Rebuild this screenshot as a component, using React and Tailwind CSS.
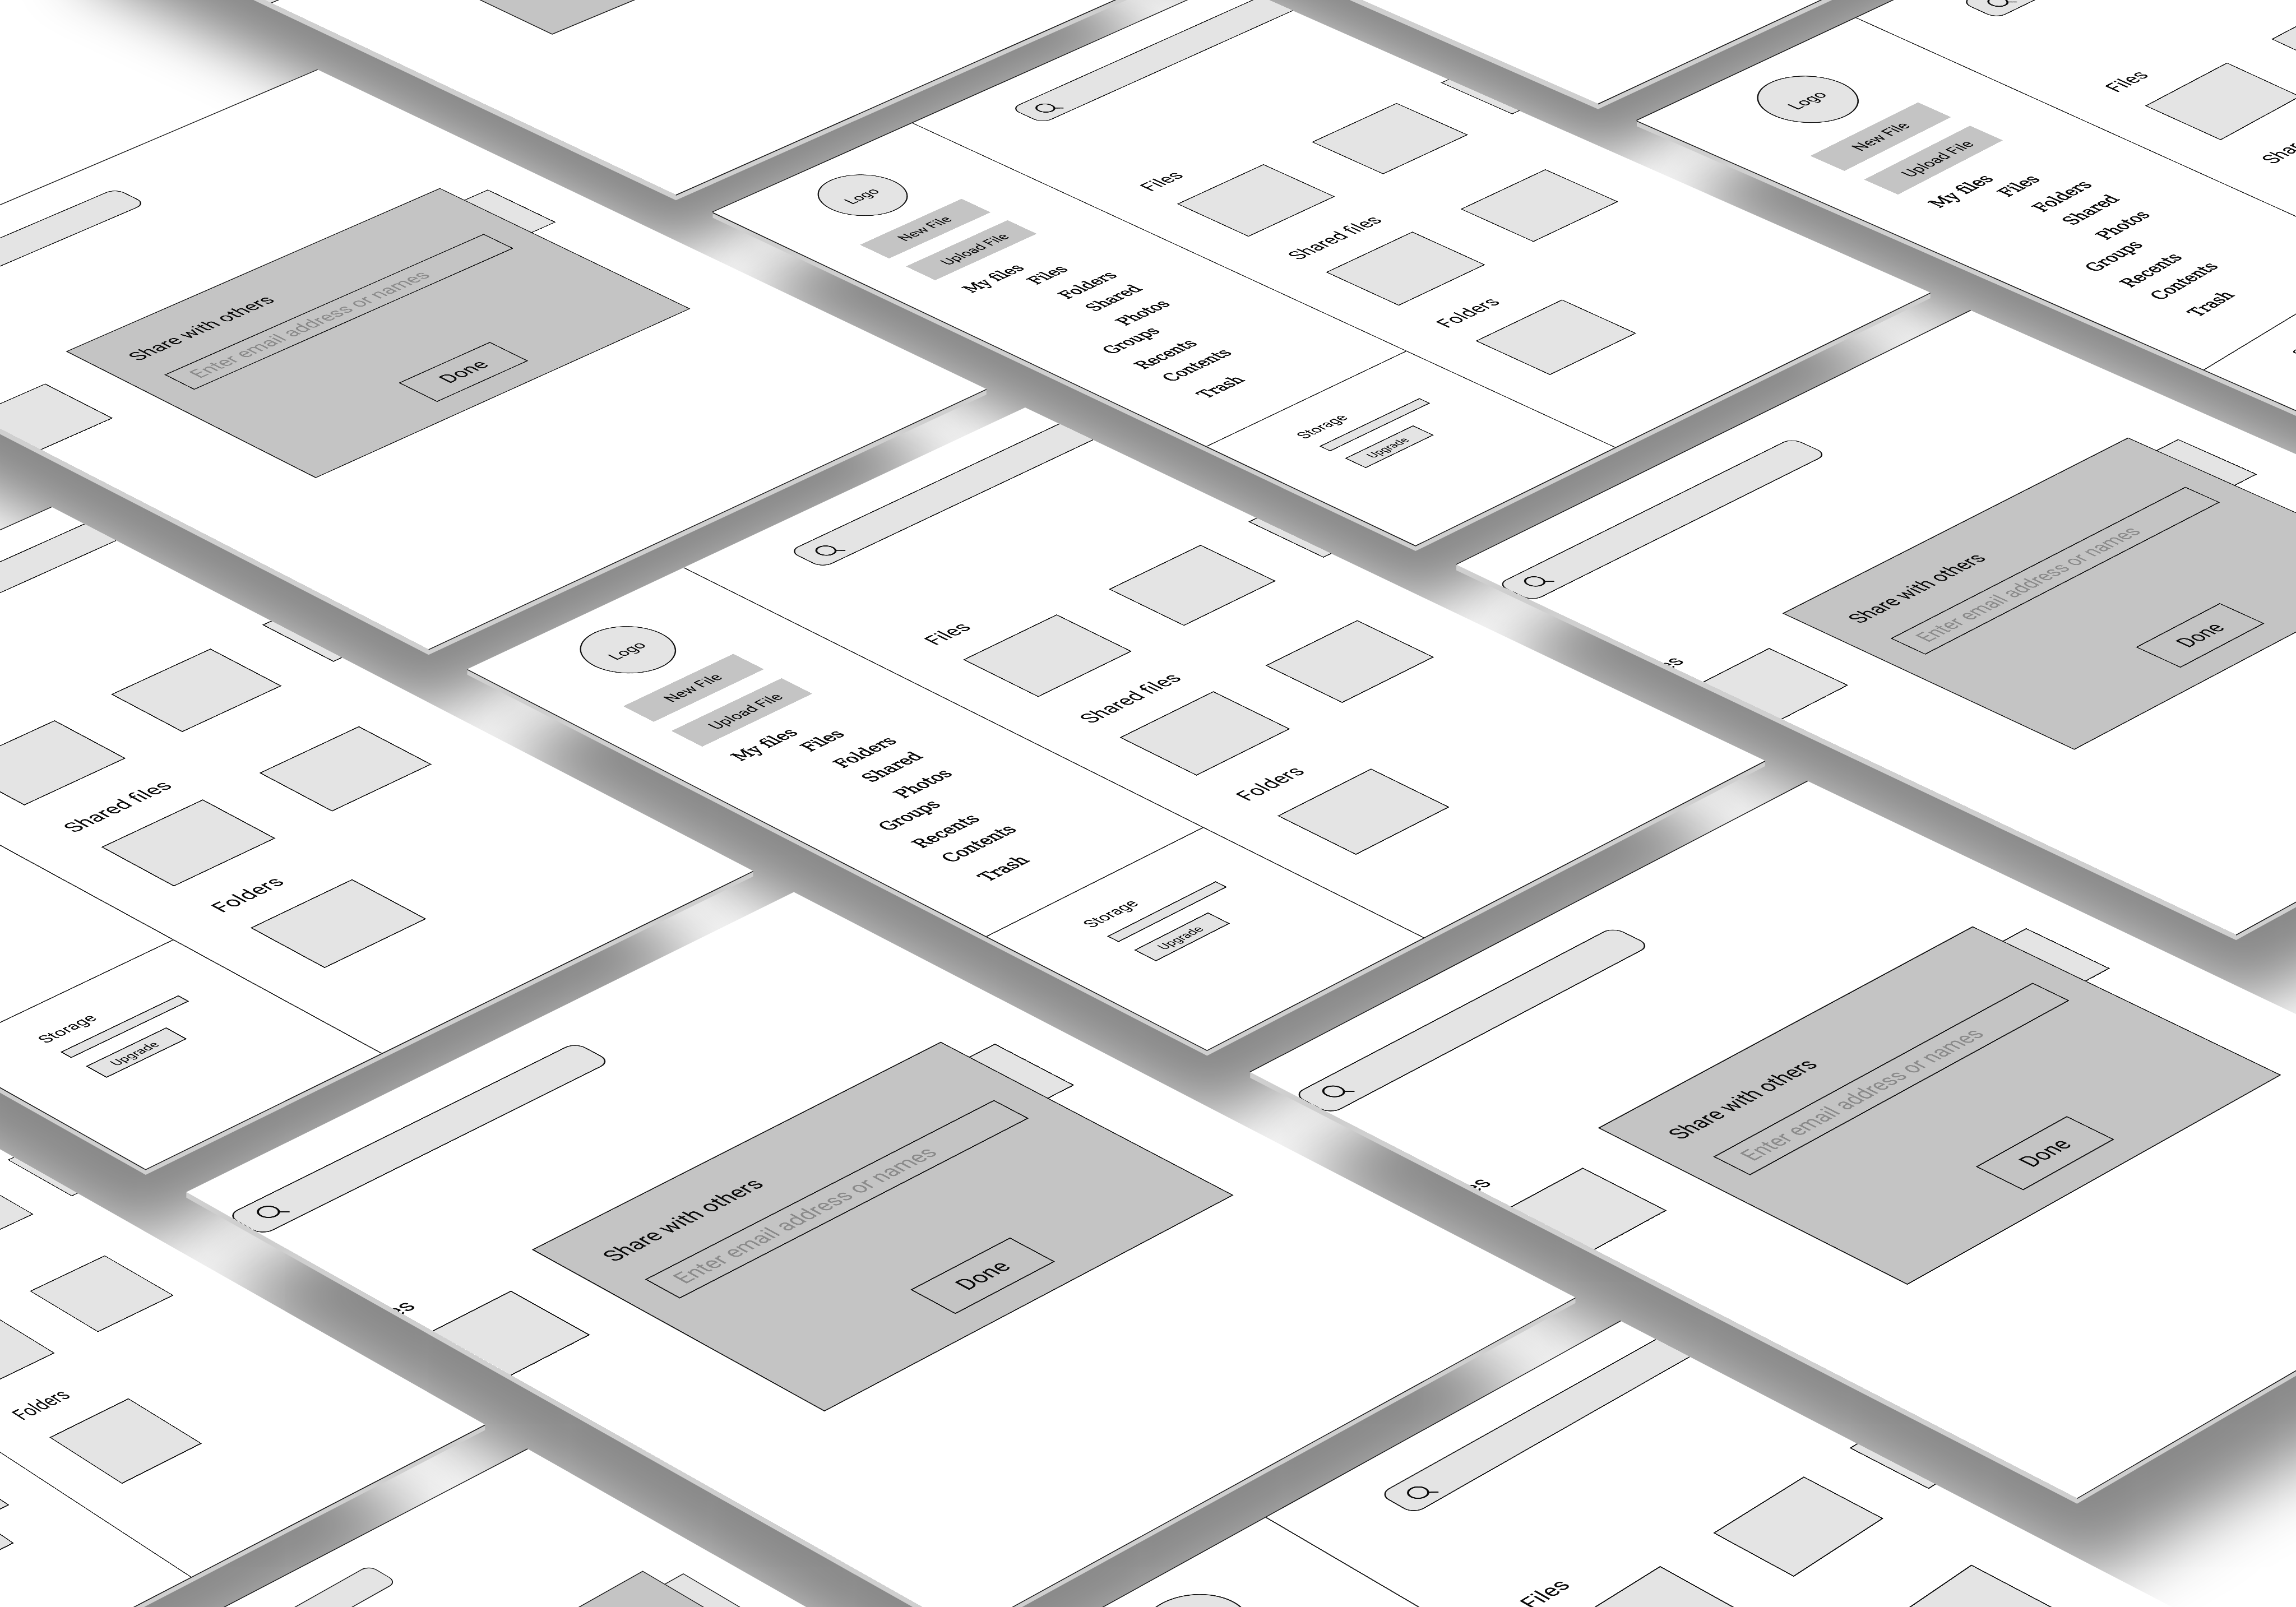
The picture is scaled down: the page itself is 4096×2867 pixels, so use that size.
import React from "react";

/* ---------- projection of the board ---------- */

// Screens are laid out flat at 2400 x 3000, then projected onto the tilted board.
const SCREEN_W = 2400;
const SCREEN_H = 3000;
const OUT = 0.8192;
const BOARD = [
  [1298.831, 1479.691, 1017.576],
  [-536.4755, 715.3939, 1457.175],
  [0.03759262, -0.049979, 1],
];
const GAP_X = 0.09322408;
const GAP_Y = 0.05517049;
const STAGGER = (1 + GAP_Y) / 2;
const THICKNESS = 10;
const IDENTITY = [
  [1, 0, 0],
  [0, 1, 0],
  [0, 0, 1],
];

const mul = (a, b) =>
  a.map((row) => b[0].map((_, j) => row.reduce((s, v, k) => s + v * b[k][j], 0)));

const inverse = ([[a, b, c], [d, e, f], [g, h, i]]) => [
  [e * i - f * h, c * h - b * i, b * f - c * e],
  [f * g - d * i, a * i - c * g, c * d - a * f],
  [d * h - e * g, b * g - a * h, a * e - b * d],
];

const apply = (m, x, y) => {
  const [X, Y, w] = m.map((r) => r[0] * x + r[1] * y + r[2]);
  return [X / w, Y / w];
};

const offsetOf = (col, row) => [
  col * (1 + GAP_X),
  row * (1 + GAP_Y) + (col === 1 ? -STAGGER : col === -1 ? STAGGER : 0),
];

const project = (u, v) => apply(BOARD, u, v).map((n) => n * OUT);

const polygon = (points) =>
  `polygon(${points.map(([x, y]) => `${x.toFixed(2)}px ${y.toFixed(2)}px`).join(",")})`;

const cornersOf = (col, row) => {
  const [u, v] = offsetOf(col, row);
  return {
    left: project(u, v),
    top: project(u + 1, v),
    right: project(u + 1, v + 1),
    bottom: project(u, v + 1),
  };
};

// Homography from the unit square of a screen to the page.
const screenMatrix = (col, row, warp = IDENTITY) => {
  const [u, v] = offsetOf(col, row);
  return [
    [[OUT, 0, 0], [0, OUT, 0], [0, 0, 1]],
    BOARD,
    [[1, 0, u], [0, 1, v], [0, 0, 1]],
    warp,
  ].reduce(mul);
};

// Perspective matrix that lays a flat screen over its slab.
const screenTransform = (col, row, warp) => {
  const full = mul(screenMatrix(col, row, warp), [
    [1 / SCREEN_W, 0, 0],
    [0, 1 / SCREEN_H, 0],
    [0, 0, 1],
  ]);
  const m = full.map((r) => r.map((x) => x / full[2][2]));
  return `matrix3d(${[
    m[0][0], m[1][0], 0, m[2][0],
    m[0][1], m[1][1], 0, m[2][1],
    0, 0, 1, 0,
    m[0][2], m[1][2], 0, m[2][2],
  ]
    .map((n) => n.toFixed(12))
    .join(",")})`;
};

// Plain 2D approximation around one point, for screens of which a small piece shows.
const pieceTransform = (col, row, warp, [fx, fy]) => {
  const m = screenMatrix(col, row, warp);
  const e = 0.08;
  const at = apply(m, fx, fy);
  const diff = (p, q) => [(p[0] - q[0]) / (2 * e), (p[1] - q[1]) / (2 * e)];
  const dx = diff(apply(m, fx + e, fy), apply(m, fx - e, fy));
  const dy = diff(apply(m, fx, fy + e), apply(m, fx, fy - e));
  return `matrix(${[
    dx[0] / SCREEN_W,
    dx[1] / SCREEN_W,
    dy[0] / SCREEN_H,
    dy[1] / SCREEN_H,
    at[0] - dx[0] * fx - dy[0] * fy,
    at[1] - dx[1] * fx - dy[1] * fy,
  ].join(",")})`;
};

// The part of a skewed screen that lies on its slab.
const warpClip = (warp) => {
  const back = inverse(warp);
  return polygon(
    [[0, 0], [1, 0], [1, 1], [0, 1]].map(([x, y]) => {
      const [X, Y] = apply(back, x, y);
      return [X * SCREEN_W, Y * SCREEN_H];
    })
  );
};

// Shadows only need the plane of the two lower slab edges.
const shadowTransform = (col, row, w, h) => {
  const { left, bottom, right } = cornersOf(col, row);
  return `matrix(${[
    (right[0] - bottom[0]) / w,
    (right[1] - bottom[1]) / w,
    (bottom[0] - left[0]) / h,
    (bottom[1] - left[1]) / h,
    left[0],
    left[1],
  ].join(",")})`;
};

/* Least-squares homography through pairs of unit coordinates. */
const solveWarp = (pairs) => {
  const n = 8;
  const A = Array.from({ length: n }, () => Array(n + 1).fill(0));
  pairs.forEach(([x, y, X, Y]) => {
    [
      [x, y, 1, 0, 0, 0, -X * x, -X * y, X],
      [0, 0, 0, x, y, 1, -Y * x, -Y * y, Y],
    ].forEach((r) => {
      for (let i = 0; i < n; i++) for (let j = 0; j <= n; j++) A[i][j] += r[i] * r[j];
    });
  });
  for (let i = 0; i < n; i++) {
    let p = i;
    for (let j = i; j < n; j++) if (Math.abs(A[j][i]) > Math.abs(A[p][i])) p = j;
    [A[i], A[p]] = [A[p], A[i]];
    for (let j = 0; j < n; j++) {
      if (j === i) continue;
      const f = A[j][i] / A[i][i];
      for (let k = i; k <= n; k++) A[j][k] -= f * A[i][k];
    }
  }
  const h = A.map((r, i) => r[n] / r[i]);
  return [
    [h[0], h[1], h[2]],
    [h[3], h[4], h[5]],
    [h[6], h[7], 1],
  ];
};

// Screens at the rim of the board are skewed over their slab.
const WARPS = {
  right: solveWarp([
    [0.0755, 0.1585, 0.0907, 0.1816],
    [0.268, 0.1585, 0.3166, 0.1784],
    [0.268, 0.2012, 0.3154, 0.2244],
    [0.0755, 0.2012, 0.0904, 0.2295],
    [0.4657, 0.3232, 0.5313, 0.3512],
    [0.6335, 0.3232, 0.7125, 0.3455],
    [0.4657, 0.4257, 0.5268, 0.457],
    [0.3795, 0, 0.4509, 0],
    [0, 0.7125, 0, 0.7771],
    [0, 0, 0, 0],
  ]),
  left: solveWarp([
    [0.7286, 0.5364, 0.8177, 0.5544],
    [0.8958, 0.5364, 0.9306, 0.5564],
    [0.8958, 0.639, 0.9304, 0.6497],
    [0.7286, 0.639, 0.8148, 0.648],
    [0.4652, 0.7465, 0.6256, 0.7481],
    [0.633, 0.7465, 0.7447, 0.749],
    [0.633, 0.8494, 0.7407, 0.8488],
    [0.4652, 0.8494, 0.62, 0.8481],
    [0.379, 1, 0.5486, 1],
    [0.8958, 0.4257, 0.9323, 0.4583],
    [0.633, 0.639, 0.7483, 0.6478],
    [0.9848, 0.3226, 0.99, 0.3722],
    [0.9846, 0.4254, 0.9905, 0.4599],
    [0.2344, 0.8553, 0.4517, 0.8534],
    [0.2945, 0.8063, 0.4989, 0.8049],
  ]),
  bottom: solveWarp([
    [0.7286, 0.3232, 0.744, 0.2888],
    [0.8957, 0.3232, 0.9047, 0.2836],
    [0.8957, 0.4257, 0.9038, 0.3758],
    [0.7286, 0.4257, 0.743, 0.3825],
    [0.3795, 0, 0.4065, 0],
    [0.9848, 0.3226, 0.986, 0.2806],
    [0.9846, 0.4254, 0.9874, 0.3721],
    [0.6335, 0.3232, 0.651, 0.2914],
    [0.8955, 0.5364, 0.9029, 0.4775],
    [0.5086, 0.0488, 0.5361, 0.0433],
    [0.5082, 0.0957, 0.5336, 0.0863],
    [1, 0.0488, 0.9991, 0.0417],
    [1, 0.0957, 1, 0.0831],
  ]),
  bottomLeft: solveWarp([
    [1, 0, 1, 0],
    [0.5625, 0.0547, 0.7097, 0.041],
    [0.5625, 0.1033, 0.7077, 0.0754],
    [0.8776, 0.29, 0.9197, 0.2102],
    [0.9206, 0.3268, 0.9483, 0.237],
  ]),
  top: solveWarp([
    [0, 1, 0, 1],
    [1, 1, 1, 1],
    [0, 0.43, 0, 0.3705],
    [0.2036, 0.6653, 0.2136, 0.6393],
    [0.36, 0.6653, 0.3707, 0.6436],
  ]),
};

const SCREENS = [
  { col: 2, row: -1, kind: "blank" },
  { col: 2, row: 0, kind: "files", warp: "right" },
  { col: 1, row: -1, kind: "share", warp: "top", piece: [0.22, 0.62] },
  { col: 1, row: 0, kind: "files" },
  { col: 1, row: 1, kind: "share" },
  { col: 0, row: -1, kind: "share" },
  { col: 0, row: 0, kind: "files", plainTop: true },
  { col: 0, row: 1, kind: "share" },
  { col: -1, row: -1, kind: "files" },
  { col: -1, row: 0, kind: "share", plainTop: true },
  { col: -1, row: 1, kind: "files", warp: "bottom" },
  { col: -2, row: 0, kind: "files", warp: "left" },
  { col: -2, row: 1, kind: "share", warp: "bottomLeft", piece: [0.8, 0.25] },
];

/* ---------- wireframe pieces ---------- */

const Tile = ({ className = "" }) => (
  <div className={`h-[309px] w-[404px] shrink-0 border-4 border-[#111] bg-[#e4e4e4] ${className}`} />
);

const SearchBar = ({ className = "" }) => (
  <div
    className={`h-[146px] w-[1356px] shrink-0 rounded-[42px] border-4 border-[#111] bg-[#e4e4e4] ${className}`}
  >
    <svg className="h-[90px] w-[100px]" viewBox="0 0 100 90" fill="none" stroke="#0a0a0a" strokeWidth="6">
      <circle cx="36" cy="36" r="29" />
      <path d="M56.5 55.5 79 76" />
    </svg>
  </div>
);

const Heading = ({ className = "", children }) => (
  <div className={`text-[76px] leading-[88px] whitespace-nowrap ${className}`}>{children}</div>
);

const NAV = [
  ["My files", "mt-[77px] ml-[202px]"],
  ["Files", "mt-[20px] ml-[391px]"],
  ["Folders", "mt-[54px] ml-[392px]"],
  ["Shared", "mt-[36px] ml-[392px]"],
  ["Photos", "mt-[50px] ml-[394px]"],
  ["Groups", "mt-[22px] ml-[224px]"],
  ["Recents", "mt-[56px] ml-[225px]"],
  ["Contents", "mt-[36px] ml-[227px]"],
  ["Trash", "mt-[68px] ml-[227px]"],
];

function FilesScreen() {
  return (
    <div className="flex h-full w-full">
      <aside className="flex w-[912px] shrink-0 flex-col border-r-4 border-[#222]">
        <div className="flex h-[2140px] flex-col border-b-4 border-[#222]">
          <div className="mt-[100px] ml-[288px] flex size-[287px] items-center rounded-full border-4 border-[#111] bg-[#e4e4e4] pt-[6px] pl-[68px] text-[58px]">
            Logo
          </div>
          <div className="mt-[89px] ml-[181px] flex h-[128px] w-[462px] items-center bg-[#c4c4c4] pl-[120px] text-[57px]">
            New File
          </div>
          <div className="mt-[74px] ml-[181px] flex h-[128px] w-[462px] items-center bg-[#c4c4c4] pt-[8px] pl-[102px] text-[57px]">
            Upload File
          </div>
          {NAV.map(([label, place]) => (
            <div
              key={label}
              className={`h-[80px] origin-left scale-x-[0.92] font-['DejaVu_Serif',serif] text-[66px] leading-[80px] whitespace-nowrap [-webkit-text-stroke:2px_#0a0a0a] ${place}`}
            >
              {label}
            </div>
          ))}
        </div>
        <div className="mt-[119px] ml-[254px] text-[58px] leading-[68px]">Storage</div>
        <div className="mt-[47px] ml-[253px] h-[45px] w-[456px] border-4 border-[#111] bg-[#e4e4e4]" />
        <div className="mt-[61px] ml-[253px] flex h-[86px] w-[310px] items-center border-4 border-[#111] bg-[#e4e4e4] pt-[4px] pl-[59px] text-[45px]">
          Upgrade
        </div>
      </aside>
      <main className="flex min-w-0 flex-1 flex-col">
        <SearchBar className="mt-[143px] ml-[301px] pt-[36px] pl-[46px]" />
        <Heading className="mt-[495px] ml-[206px]">Files</Heading>
        <div className="mt-[97px] ml-[205px] flex">
          <Tile />
          <Tile className="ml-[227px]" />
          <Tile className="ml-[212px]" />
        </div>
        <Heading className="mt-[148px] ml-[202px]">Shared files</Heading>
        <div className="mt-[95px] ml-[205px] flex">
          <Tile />
          <Tile className="ml-[227px]" />
        </div>
        <Heading className="mt-[136px] ml-[203px]">Folders</Heading>
        <div className="mt-[98px] ml-[205px] flex">
          <Tile />
        </div>
      </main>
    </div>
  );
}

function ShareScreen() {
  return (
    <div className="relative flex h-full w-full flex-col">
      <SearchBar className="mt-[164px] ml-[-3px] pt-[27px] pl-[58px]" />
      <Heading className="mt-[487px] ml-[-106px]">Files</Heading>
      <div className="mt-[97px] ml-[-105px] flex">
        <Tile />
        <Tile className="ml-[1509px]" />
      </div>
      <div className="absolute top-[870px] left-[489px] flex h-[1128px] w-[1619px] flex-col border-4 border-[#111] bg-[#c4c4c4]">
        <Heading className="mt-[128px] ml-[116px]">Share with others</Heading>
        <div className="mt-[102px] ml-[115px] flex h-[135px] w-[1381px] items-center border-4 border-[#111] pl-[58px] text-[75.5px] whitespace-nowrap text-[#8a8a8a]">
          Enter email address or names
        </div>
        <div className="mt-[400px] ml-[608px] flex h-[171px] w-[394px] items-center border-4 border-[#111] pb-[2px] pl-[106px] text-[76px]">
          Done
        </div>
      </div>
    </div>
  );
}

function Slab({ col, row, kind, plainTop }) {
  const { left, top, right, bottom } = cornersOf(col, row);
  const move = ([x, y], dx, dy) => [x + dx, y + dy];
  const edge = (a, b, dx, dy) => polygon([a, b, move(b, dx, dy), move(a, dx, dy)]);
  const side = polygon([
    left,
    bottom,
    right,
    move(right, 0, THICKNESS),
    move(bottom, 0, THICKNESS),
    move(left, 0, THICKNESS),
  ]);
  return (
    <>
      <div className="absolute inset-0 bg-[#cfcfcf]" style={{ clipPath: side }} />
      <div className="absolute inset-0 bg-white" style={{ clipPath: polygon([left, top, right, bottom]) }} />
      <div className="absolute inset-0 bg-[#111]" style={{ clipPath: edge(bottom, right, 0, 1.6) }} />
      {kind === "files" && (
        <div className="absolute inset-0 bg-[#111]" style={{ clipPath: edge(left, bottom, 0, 1.6) }} />
      )}
      {!plainTop && (
        <div className="absolute inset-0 bg-[#111]" style={{ clipPath: edge(left, top, -1.2, -0.9) }} />
      )}
    </>
  );
}

const ScreenContent = ({ kind }) => (kind === "files" ? <FilesScreen /> : <ShareScreen />);

function Piece({ col, row, kind, warp, piece }) {
  const { left, top, right, bottom } = cornersOf(col, row);
  return (
    <div className="absolute inset-0 overflow-hidden" style={{ clipPath: polygon([left, top, right, bottom]) }}>
      <div
        className="h-[3000px] w-[2400px] origin-top-left"
        style={{ transform: pieceTransform(col, row, WARPS[warp], piece) }}
      >
        <ScreenContent kind={kind} />
      </div>
    </div>
  );
}

function Screen({ col, row, kind, warp }) {
  return (
    <div
      className="absolute top-0 left-0 h-[3000px] w-[2400px] origin-top-left overflow-hidden"
      style={{
        transform: screenTransform(col, row, WARPS[warp]),
        clipPath: warp ? warpClip(WARPS[warp]) : undefined,
      }}
    >
      <ScreenContent kind={kind} />
    </div>
  );
}

export default function App() {
  return (
    <div className="relative h-[2867px] w-[4096px] overflow-hidden bg-white font-['Roboto',sans-serif] text-[#0a0a0a]">
      {SCREENS.map(({ col, row }) => (
        <div
          key={`shadow-${col}-${row}`}
          className="absolute top-0 left-0 h-[1500px] w-[1200px] origin-top-left shadow-[-183px_176px_120px_-27px_#898989]"
          style={{ transform: shadowTransform(col, row, 1200, 1500) }}
        />
      ))}
      {SCREENS.map((s) => (
        <Slab key={`slab-${s.col}-${s.row}`} {...s} />
      ))}
      {SCREENS.filter((s) => s.piece).map((s) => (
        <Piece key={`piece-${s.col}-${s.row}`} {...s} />
      ))}
      {SCREENS.filter((s) => s.kind !== "blank" && !s.piece).map((s) => (
        <Screen key={`screen-${s.col}-${s.row}`} {...s} />
      ))}
    </div>
  );
}
